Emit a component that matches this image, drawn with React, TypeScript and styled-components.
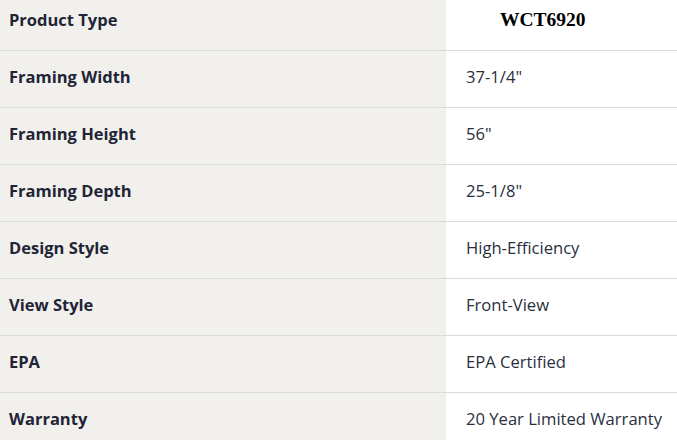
import styled, { createGlobalStyle } from "styled-components";

const specs = [
  { label: "Framing Width", value: '37-1/4"' },
  { label: "Framing Height", value: '56"' },
  { label: "Framing Depth", value: '25-1/8"' },
  { label: "Design Style", value: "High-Efficiency" },
  { label: "View Style", value: "Front-View" },
  { label: "EPA", value: "EPA Certified" },
  { label: "Warranty", value: "20 Year Limited Warranty" },
];

const GlobalStyle = createGlobalStyle`
  html, body {
    margin: 0;
    padding: 0;
    background: #ffffff;
    overflow: hidden;
  }
`;

const App = () => {
  return (
    <>
      <GlobalStyle />
      <SpecTable>
        <tbody>
          <Row first={1}>
            <Label>Product Type</Label>
            <ModelCell>WCT6920</ModelCell>
          </Row>
          {specs.map((each, index) => (
            <Row key={index}>
              <Label>{each.label}</Label>
              <Value>{each.value}</Value>
            </Row>
          ))}
        </tbody>
      </SpecTable>
    </>
  );
};

const SpecTable = styled.table`
  width: 677px;
  border-collapse: collapse;
  table-layout: fixed;
  font-family: "Open Sans", "Noto Sans", sans-serif;
`;

const Row = styled.tr<{ first?: number }>`
  height: ${({ first }) => (first ? "50px" : "57px")};
  border-top: ${({ first }) => (first ? "none" : "1px solid #dadbe0")};

  td {
    padding-bottom: ${({ first }) => (first ? "11px" : "6px")};
  }
`;

const Label = styled.td`
  width: 446px;
  box-sizing: border-box;
  padding-left: 9px;
  background-color: #f2f0ed;
  color: #1f2536;
  font-size: 16.5px;
  font-weight: 700;
  vertical-align: middle;
`;

const Value = styled.td`
  padding-left: 20px;
  background-color: #ffffff;
  color: #2a2f3e;
  font-size: 16.6px;
  font-weight: 400;
  vertical-align: middle;
  white-space: nowrap;
`;

const ModelCell = styled(Value)`
  padding-left: 54px;
  font-family: "Liberation Serif", "Times New Roman", serif;
  font-weight: 700;
  font-size: 19.5px;
  color: #000000;
`;

export default App;
